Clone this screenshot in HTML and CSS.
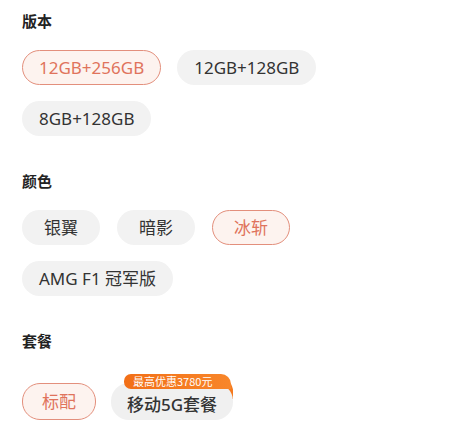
FILE: index.html
```html
<!DOCTYPE html>
<html lang="zh-CN">
<head>
<meta charset="utf-8">
<link rel="stylesheet" href="styles.css">
</head>
<body>
<div class="page">
  <section class="group">
    <h2 class="title">版本</h2>
    <div class="chips">
      <span class="chip selected">12GB+256GB</span>
      <span class="chip">12GB+128GB</span>
      <span class="chip">8GB+128GB</span>
    </div>
  </section>
  <section class="group">
    <h2 class="title">颜色</h2>
    <div class="chips colors">
      <span class="chip short">银翼</span>
      <span class="chip short">暗影</span>
      <span class="chip short selected">冰斩</span>
      <span class="chip">AMG F1 冠军版</span>
    </div>
  </section>
  <section class="group">
    <h2 class="title">套餐</h2>
    <div class="chips plans">
      <span class="chip plan-std selected">标配</span>
      <span class="plan-wrap">
        <span class="tail"></span>
        <span class="chip plan-5g">移动5G套餐</span>
        <span class="badge">最高优惠3780元</span>
      </span>
    </div>
  </section>
</div>
</body>
</html>
```
FILE: styles.css
```css
html, body {
  margin: 0;
  padding: 0;
  background: #ffffff;
}
body {
  font-family: "Noto Sans", "Noto Sans CJK SC", sans-serif;
  color: #333333;
}
.page {
  padding: 10px 0 0 22px;
  display: flex;
  flex-direction: column;
  gap: 34px;
}
.title {
  margin: 0;
  font-size: 15px;
  line-height: 22px;
  font-weight: 700;
  color: #222222;
  font-family: "Noto Sans CJK SC", sans-serif;
}
.chips {
  margin-top: 18px;
  display: flex;
  flex-wrap: wrap;
  column-gap: 16px;
  row-gap: 16px;
  width: 320px;
}
.chips.colors {
  column-gap: 17px;
}
.chip {
  box-sizing: border-box;
  height: 35px;
  padding: 0 16px;
  border-radius: 18px;
  background: #f2f2f2;
  color: #333333;
  font-size: 17px;
  font-weight: 400;
  line-height: 35px;
  display: inline-flex;
  align-items: center;
  justify-content: center;
  white-space: nowrap;
  border: 1.5px solid transparent;
}
.chip.short {
  min-width: 78px;
}
.chip.selected {
  background: #fdf3ef;
  border-color: #e38f7c;
  color: #e0735c;
}
.chips.plans {
  margin-top: 31px;
  column-gap: 15px;
}
.chip.plan-std {
  height: 37px;
  min-width: 73px;
  padding: 0 19px;
}
.plan-wrap {
  position: relative;
  display: inline-flex;
}
.chip.plan-5g {
  position: relative;
  z-index: 1;
  height: 37px;
  width: 122px;
  padding: 6px 0 0;
  font-size: 17px;
  font-weight: 500;
  color: #333333;
  background: #f0f0f0;
}
.tail {
  position: absolute;
  right: 0;
  top: -4px;
  width: 20px;
  height: 20px;
  background: #f57a1e;
  border-radius: 0 12px 0 0;
  z-index: 0;
}
.badge {
  position: absolute;
  z-index: 2;
  top: -9px;
  right: 2px;
  width: 107px;
  height: 15px;
  box-sizing: border-box;
  padding-left: 9px;
  border-radius: 7px 10px 0 7px;
  background: linear-gradient(90deg, #f26f17, #f8862a);
  color: #ffffff;
  font-size: 11px;
  line-height: 15px;
  font-family: "Noto Sans CJK SC", sans-serif;
  white-space: nowrap;
}
```
